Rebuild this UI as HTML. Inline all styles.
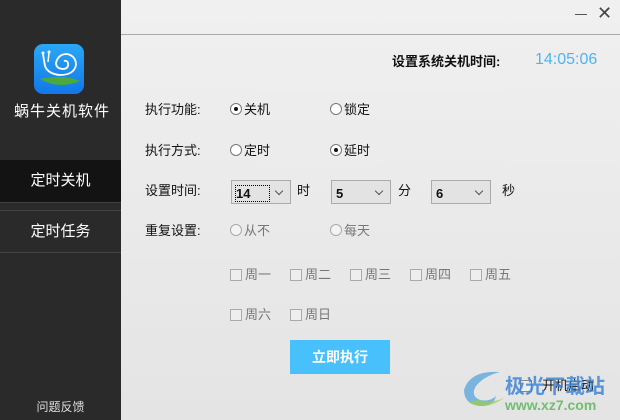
<!DOCTYPE html>
<html><head><meta charset="utf-8"><style>
*{margin:0;padding:0;box-sizing:border-box}
body{width:620px;height:420px;overflow:hidden;font-family:"Liberation Sans","Noto Sans CJK SC",sans-serif;background:linear-gradient(#f0f0f0,#e4e4e4);position:relative;color:#111}
.a{position:absolute;white-space:nowrap}
#side{position:absolute;left:0;top:0;width:121px;height:420px;background:#2a2a2a}
.t{font-size:13px}
.r{position:absolute;width:12px;height:12px;border:1px solid #777;border-radius:50%;background:#fff}
.r.on::after{content:"";position:absolute;left:3px;top:3px;width:4px;height:4px;border-radius:50%;background:#111}
.r.dis{border-color:#aaa;background:#f4f4f4}
.cb{position:absolute;width:12px;height:12px;border:1px solid #aaa;background:#eee}
.g{color:#777}
.sel{position:absolute;height:24px;width:60px;border:1px solid #aaa;background:#e3e3e3;font-size:13px;font-weight:bold;padding:5px 0 0 4px}
.sel::after{content:"";position:absolute;right:8px;top:7px;width:5px;height:5px;border-right:1px solid #555;border-bottom:1px solid #555;transform:rotate(45deg)}
</style></head><body>
<div id="side">
<svg class="a" style="left:34px;top:44px" width="50" height="50" viewBox="0 0 50 50">
<defs><linearGradient id="bg" x1="0" y1="0" x2="0" y2="1"><stop offset="0" stop-color="#2aa8f5"/><stop offset="1" stop-color="#1277e8"/></linearGradient></defs>
<rect width="50" height="50" rx="9" fill="url(#bg)"/>
<path d="M6 35 Q25 46 46 37 Q30 30 6 35Z" fill="#4caa3a"/>
<path d="M9 10 L11 22 Q14 30 26 31 Q40 31 42 21 Q42 12 33 10 Q24 10 22 19 Q22 25 30 25 Q35 24 34 19 Q33 16 30 17" fill="none" stroke="#fff" stroke-width="1.8"/>
<path d="M15 9 L14 18" stroke="#fff" stroke-width="1.5"/><circle cx="9" cy="9" r="1.5" fill="#fff"/><circle cx="15" cy="8" r="1.5" fill="#fff"/>
</svg>
<div class="a" style="left:14px;top:100px;font-size:15px;color:#fff;letter-spacing:1px">蜗牛关机软件</div>
<div class="a" style="left:0;top:160px;width:121px;height:42px;background:#131313;color:#fff;font-size:15px;text-align:center;line-height:42px">定时关机</div>
<div class="a" style="left:0;top:202px;width:121px;height:9px;border-top:1px solid #444;border-bottom:1px solid #444"></div>
<div class="a" style="left:0;top:211px;width:121px;height:42px;color:#fff;font-size:15px;text-align:center;line-height:42px;border-bottom:1px solid #444">定时任务</div>
<div class="a" style="left:0;top:398px;width:121px;text-align:center;color:#ddd;font-size:12px">问题反馈</div>
</div>
<div class="a" style="left:121px;top:34px;width:499px;height:1px;background:#aaa"></div>
<div class="a" style="left:575px;top:14px;width:12px;height:1px;background:#555"></div>
<div class="a" style="left:597px;top:3px;font-size:18px;color:#444">✕</div>
<div class="a t" style="left:392px;top:51px;font-weight:bold">设置系统关机时间:</div>
<div class="a" style="left:535px;top:51px;font-size:16px;color:#4db4f0">14:05:06</div>

<div class="a t" style="left:145px;top:99px">执行功能:</div>
<div class="r on" style="left:230px;top:103px"></div><div class="a t" style="left:244px;top:99px">关机</div>
<div class="r" style="left:330px;top:103px"></div><div class="a t" style="left:344px;top:99px">锁定</div>

<div class="a t" style="left:145px;top:140px">执行方式:</div>
<div class="r" style="left:230px;top:144px"></div><div class="a t" style="left:244px;top:140px">定时</div>
<div class="r on" style="left:330px;top:144px"></div><div class="a t" style="left:344px;top:140px">延时</div>

<div class="a t" style="left:145px;top:180px">设置时间:</div>
<div class="sel" style="left:231px;top:180px"><span style="outline:1px dotted #000">14&nbsp;&nbsp;&nbsp;&nbsp;&nbsp;</span></div>
<div class="a t" style="left:297px;top:180px">时</div>
<div class="sel" style="left:331px;top:180px">5</div>
<div class="a t" style="left:398px;top:180px">分</div>
<div class="sel" style="left:431px;top:180px">6</div>
<div class="a t" style="left:502px;top:180px">秒</div>

<div class="a t" style="left:145px;top:220px">重复设置:</div>
<div class="r dis" style="left:230px;top:224px"></div><div class="a t g" style="left:244px;top:220px">从不</div>
<div class="r dis" style="left:330px;top:224px"></div><div class="a t g" style="left:344px;top:220px">每天</div>

<div class="cb" style="left:230px;top:269px"></div><div class="a t g" style="left:245px;top:264px">周一</div>
<div class="cb" style="left:290px;top:269px"></div><div class="a t g" style="left:305px;top:264px">周二</div>
<div class="cb" style="left:350px;top:269px"></div><div class="a t g" style="left:365px;top:264px">周三</div>
<div class="cb" style="left:410px;top:269px"></div><div class="a t g" style="left:425px;top:264px">周四</div>
<div class="cb" style="left:470px;top:269px"></div><div class="a t g" style="left:485px;top:264px">周五</div>
<div class="cb" style="left:230px;top:309px"></div><div class="a t g" style="left:245px;top:304px">周六</div>
<div class="cb" style="left:290px;top:309px"></div><div class="a t g" style="left:305px;top:304px">周日</div>

<div class="a" style="left:290px;top:340px;width:100px;height:34px;background:#48c0fc;color:#fff;font-weight:bold;font-size:14px;text-align:center;line-height:34px">立即执行</div>
<div class="cb" style="left:520px;top:380px;border-color:#888"></div>
<div class="a t" style="left:542px;top:375px">开机启动</div>
<div class="a" style="left:505px;top:370px;font-size:20px;font-weight:bold;color:#3f86d6;opacity:.85">极光下载站</div>
<div class="a" style="left:505px;top:397px;font-size:14px;font-weight:bold;color:#5cb85c;opacity:.85">www.xz7.com</div>
<svg class="a" style="left:460px;top:368px" width="50" height="44" viewBox="0 0 50 44"><path d="M40 4 Q10 2 4 22 Q4 36 20 38 Q34 38 36 28 Q30 34 20 32 Q10 28 16 18 Q24 8 40 4Z" fill="#4aa0dc" opacity=".7"/><path d="M8 34 Q24 44 44 30 Q30 36 18 32Z" fill="#9bd04a" opacity=".7"/></svg>
</body></html>
